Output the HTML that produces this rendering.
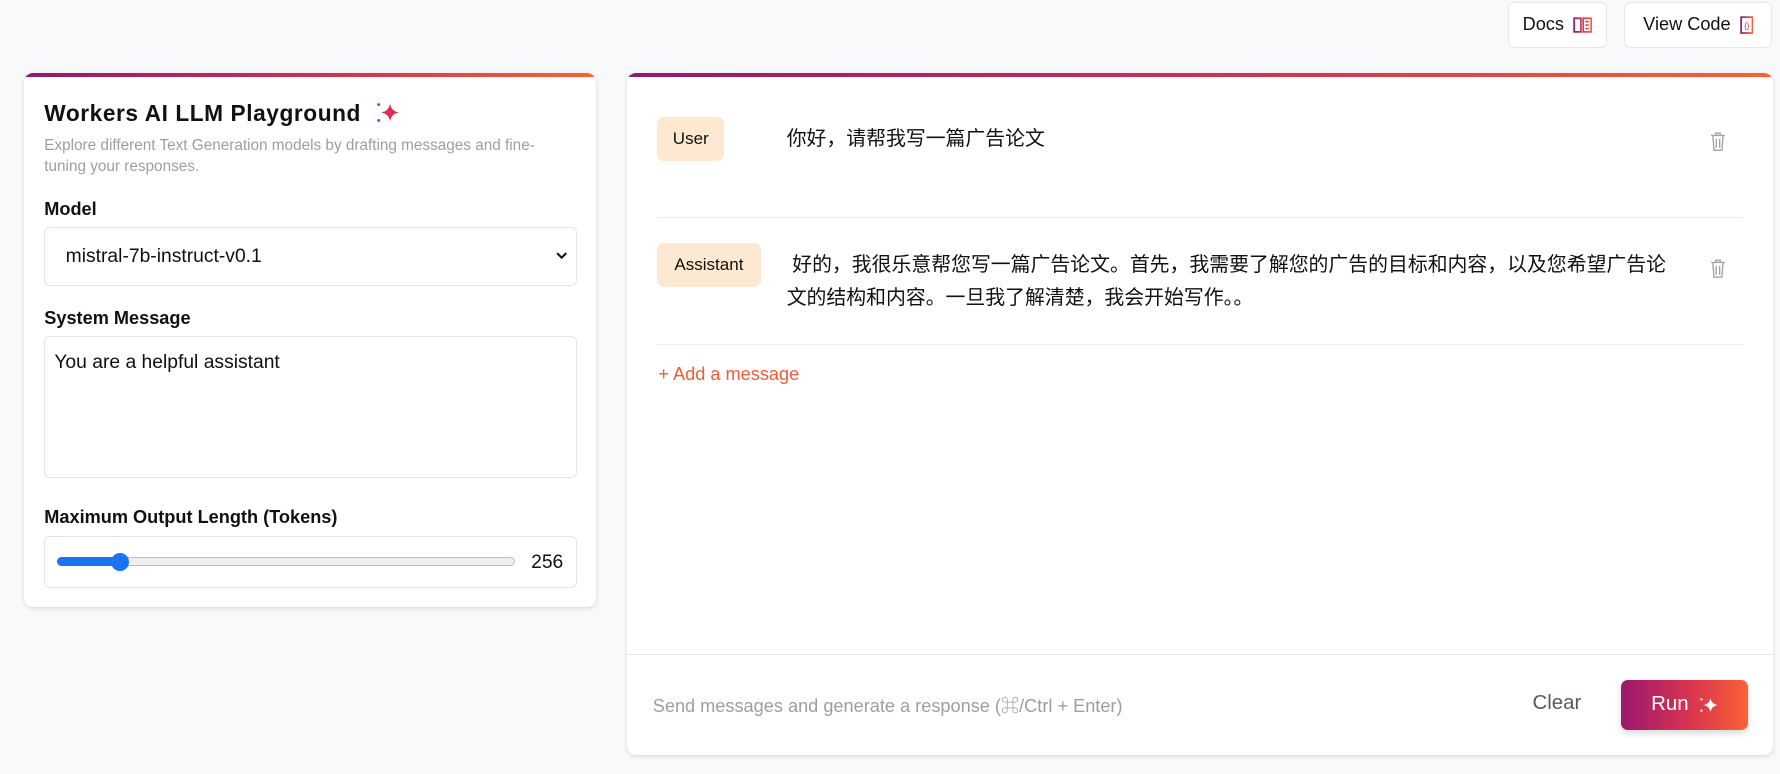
<!DOCTYPE html>
<html><head><meta charset="utf-8"><style>
html{zoom:1.1352}
*{box-sizing:border-box;margin:0;padding:0}
body{width:1568px;height:682px;background:#f8f9fb;font-family:"Liberation Sans","Noto Sans CJK SC",sans-serif;color:#111;position:relative;overflow:hidden}
.abs{position:absolute}
.btn{position:absolute;top:2px;height:40px;background:#fff;border:1px solid #e6e7ea;border-radius:6px;font-size:16px;display:flex;align-items:center;justify-content:center;gap:8px}
.card{position:absolute;background:#fff;border-radius:8px;box-shadow:0 1px 4px rgba(0,0,0,.12);overflow:hidden}
.card:before{content:"";position:absolute;left:0;right:0;top:0;height:4px;background:linear-gradient(90deg,#901a6f,#d9344f 60%,#fb6234)}
.lbl{position:absolute;left:18px;font-weight:bold;font-size:16px}
.box{position:absolute;left:18px;width:469px;border:1px solid #e3e4e7;border-radius:5px;background:#fff}
.pill{position:absolute;left:27px;height:39px;background:#fde8d1;border-radius:6px;font-size:15px;display:flex;align-items:center;justify-content:center}
.msg{position:absolute;left:141px;font-size:17.5px;line-height:29px}
.hr{position:absolute;left:27px;right:27px;height:1px;background:#eceef0}
.trash{position:absolute;left:954px}
</style></head><body>
<div class="btn" style="left:1328px;width:88px">Docs
<svg width="17" height="16" viewBox="0 0 17 16"><defs><linearGradient id="g" x1="0" x2="1"><stop offset="0" stop-color="#9a1a6e"/><stop offset="1" stop-color="#fb6234"/></linearGradient></defs><path d="M1 2h6v12H1zM9 2h7v12H9z" fill="none" stroke="url(#g)" stroke-width="1.5"/><path d="M11 5h3M11 8h3M11 11h3" stroke="url(#g)" stroke-width="1.3"/></svg></div>
<div class="btn" style="left:1431px;width:130px">View Code
<svg width="12" height="16" viewBox="0 0 12 16"><rect x="1" y="1" width="10" height="14" fill="none" stroke="url(#g)" stroke-width="1.5"/><text x="6" y="11" font-size="7" text-anchor="middle" fill="#c0305a">{}</text></svg></div>

<div class="card" style="left:21px;top:64px;width:504px;height:471px">
<div class="abs" style="left:18px;top:24px;font-size:20px;font-weight:bold;letter-spacing:0.5px">Workers AI LLM Playground</div>
<svg class="abs" style="left:308px;top:24px" width="26" height="22" viewBox="0 0 26 22"><path d="M15 3 Q16 10 23 11 Q16 12 15 19 Q14 12 7 11 Q14 10 15 3Z" fill="#d9304f"/><circle cx="5" cy="4" r="1.3" fill="#c0305a"/><circle cx="5" cy="18" r="1.3" fill="#c0305a"/></svg>
<div class="abs" style="left:18px;top:56px;width:462px;font-size:13.5px;line-height:18px;color:#9a9ea6">Explore different Text Generation models by drafting messages and fine-tuning your responses.</div>
<div class="lbl" style="top:111px">Model</div>
<div class="box" style="top:136px;height:52px;font-size:17px;padding:16px 0 0 18px">mistral-7b-instruct-v0.1<svg style="position:absolute;right:7px;top:21px" width="10" height="7" viewBox="0 0 10 7"><path d="M1 1l4 4 4-4" fill="none" stroke="#111" stroke-width="1.8"/></svg></div>
<div class="lbl" style="top:207px">System Message</div>
<div class="box" style="top:232px;height:125px;font-size:17px;padding:13px 0 0 8px">You are a helpful assistant</div>
<div class="lbl" style="top:383px">Maximum Output Length (Tokens)</div>
<div class="box" style="top:408px;height:46px">
<div class="abs" style="left:10px;top:18px;width:404px;height:8px;border:1px solid #bbb;border-radius:4px;background:#efefef"></div>
<div class="abs" style="left:10px;top:18px;width:58px;height:8px;border-radius:4px;background:#1a73f0"></div>
<div class="abs" style="left:58px;top:14px;width:16px;height:16px;border-radius:50%;background:#1a73f0"></div>
<div class="abs" style="left:428px;top:13px;font-size:17px">256</div>
</div>
</div>

<div class="card" style="left:552px;top:64px;width:1010px;height:601px">
<div class="pill" style="top:39px;width:59px">User</div>
<div class="msg" style="top:44px">你好，请帮我写一篇广告论文</div>
<svg class="trash" style="top:52px" width="14" height="17" viewBox="0 0 14 17"><path d="M1 3h12M5 3V1h4v2M2.5 3l1 13h7l1-13M5.5 6v8M8.5 6v8" fill="none" stroke="#a0a3a8" stroke-width="1.2"/></svg>
<div class="hr" style="top:127px"></div>
<div class="pill" style="top:150px;width:91px">Assistant</div>
<div class="msg" style="top:155px;width:782px">&nbsp;好的，我很乐意帮您写一篇广告论文。首先，我需要了解您的广告的目标和内容，以及您希望广告论文的结构和内容。一旦我了解清楚，我会开始写作。。</div>
<svg class="trash" style="top:164px" width="14" height="17" viewBox="0 0 14 17"><path d="M1 3h12M5 3V1h4v2M2.5 3l1 13h7l1-13M5.5 6v8M8.5 6v8" fill="none" stroke="#a0a3a8" stroke-width="1.2"/></svg>
<div class="hr" style="top:239px"></div>
<div class="abs" style="left:28px;top:257px;font-size:16px;color:#f25b36">+ Add a message</div>
<div class="abs" style="left:0;right:0;top:512px;height:1px;background:#e6e7ea"></div>
<div class="abs" style="left:23px;top:546px;font-size:16px;color:#9a9ea6">Send messages and generate a response (⌘/Ctrl + Enter)</div>
<div class="abs" style="left:798px;top:546px;font-size:18px;color:#555a62">Clear</div>
<div class="abs" style="left:876px;top:535px;width:112px;height:44px;border-radius:6px;background:linear-gradient(90deg,#9a1a6e,#d9344f 55%,#fb6234);color:#fff;font-size:18px;display:flex;align-items:center;justify-content:center;gap:8px;box-shadow:0 3px 6px rgba(0,0,0,.15)">Run
<svg width="18" height="16" viewBox="0 0 18 16"><path d="M11 2 Q12 7 17 8 Q12 9 11 14 Q10 9 5 8 Q10 7 11 2Z" fill="#fff"/><circle cx="3" cy="3" r="1" fill="#fff"/><circle cx="3" cy="13" r="1" fill="#fff"/></svg></div>
</div>
</body></html>
